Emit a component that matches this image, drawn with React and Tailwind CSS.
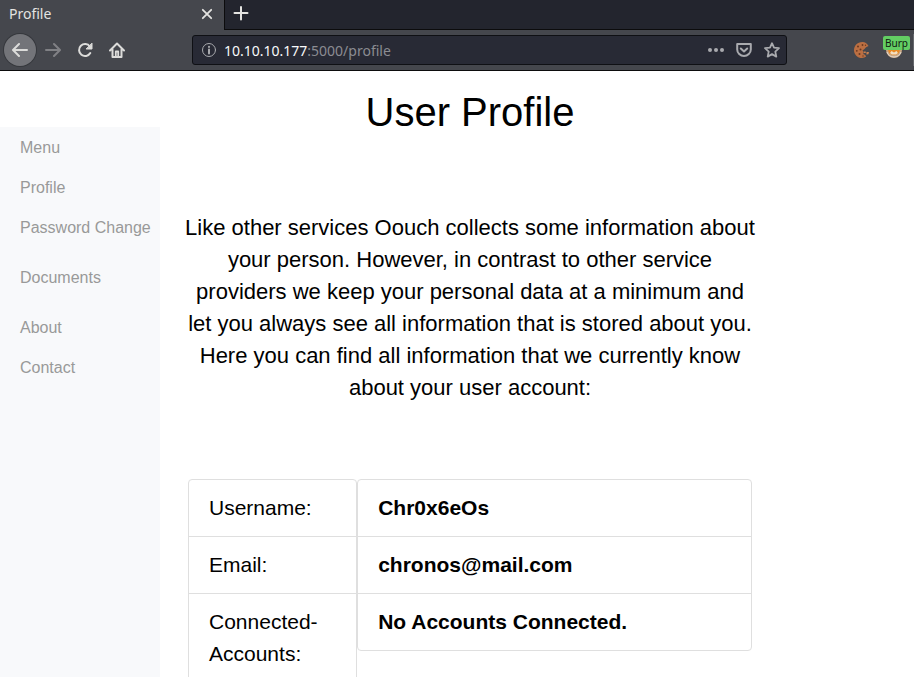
const menuGroups = [
  ["Menu", "Profile", "Password Change"],
  ["Documents"],
  ["About", "Contact"],
];

const labels = ["Username:", "Email:", "Connected-Accounts:"];
const values = ["Chr0x6eOs", "chronos@mail.com", "No Accounts Connected."];

function Icon({ size = 16, children, width = 2, className = "" }) {
  return (
    <svg
      width={size}
      height={size}
      viewBox="0 0 16 16"
      fill="none"
      stroke="currentColor"
      strokeWidth={width}
      strokeLinecap="round"
      strokeLinejoin="round"
      aria-hidden="true"
      className={`shrink-0 ${className}`}
    >
      {children}
    </svg>
  );
}

function TabStrip() {
  return (
    <div className="flex h-[30px] bg-[#23252e] text-[#e4e4e1]">
      <div className="flex w-[224px] items-center justify-between bg-[#45474d] px-[9px] pb-0.5">
        <span className="text-sm leading-7">Profile</span>
        <button type="button" aria-label="Close tab" className="flex">
          <Icon width={1.8}>
            <path d="M3.800 3.800l8.400 8.400M12.200 3.800l-8.400 8.400" />
          </Icon>
        </button>
      </div>
      <div className="flex flex-1 items-center border-b border-l border-[#0c0c0d] pl-2">
        <button type="button" aria-label="New tab" className="flex pb-1">
          <Icon>
            <path d="M8 2v12.500M1.500 8h13" />
          </Icon>
        </button>
      </div>
    </div>
  );
}

function CookieIcon() {
  return (
    <svg width="18" height="18" viewBox="0 0 18 18" aria-hidden="true">
      <path
        d="M9.500 1C4 1 1 5 1 9.200s3.500 7.800 8 7.800c1.800 0 3.200-.5 4.200-1.400l-1.200-1.800-1.800-.8.6-2-1.300-1.500L11.500 8l1.500-1.800 2.500-1.200C14 2.500 12 1 9.500 1z"
        fill="#bb6f42"
      />
      <path d="M13.500 11h2.500l-.6 2.300-2 .2zM11 10.500h1.800v1.500H11z" fill="#c98050" />
      <g fill="#6b3820">
        <circle cx="5" cy="5.500" r="1" />
        <circle cx="9.500" cy="4" r="0.900" />
        <circle cx="3.800" cy="9.800" r="0.900" />
        <circle cx="7.500" cy="8.500" r="1" />
        <circle cx="6.500" cy="13" r="1" />
        <circle cx="10" cy="15" r="0.700" />
        <circle cx="12.500" cy="4.200" r="0.700" />
      </g>
    </svg>
  );
}

function FoxIcon() {
  return (
    <svg width="18" height="18" viewBox="0 0 18 18" aria-hidden="true">
      <circle cx="9" cy="9" r="8" fill="#c9a582" />
      <path d="M3 7h12c0 5-2.500 7-6 7s-6-2-6-7z" fill="#e88a24" />
      <path d="M5 12l1.500-2L9 11.500l2.500-1.500 1.500 2-2 1.500H7z" fill="#f3e0c4" />
      <path d="M2 11c1 3.500 4 5 7 5s6-1.500 7-5" fill="none" stroke="#e3dcd2" />
    </svg>
  );
}

function Toolbar() {
  return (
    <div className="flex h-[41px] items-center border-b border-[#0c0c0d] bg-[#45474d] pl-1 text-[#dcdcda]">
      <button
        type="button"
        aria-label="Back"
        className="flex size-8 items-center justify-center rounded-full bg-[#737479] ring-1 ring-[#36383d]"
      >
        <Icon>
          <path d="M15 8H1.500M7 2L1 8l6 6" />
        </Icon>
      </button>
      <button type="button" aria-label="Forward" disabled className="ml-[9px] flex text-[#808185]">
        <Icon>
          <path d="M1 8h13.500M9 2l6 6-6 6" />
        </Icon>
      </button>
      <button type="button" aria-label="Reload" className="ml-4 flex">
        <Icon>
          <path d="M13.300 11a6 6 0 1 1-.4-6.500" />
          <path d="M15 1.500V7H9.500z" fill="currentColor" strokeWidth="1" />
        </Icon>
      </button>
      <button type="button" aria-label="Home" className="ml-4 flex">
        <Icon>
          <path d="M1 8.500L8 1.500l7 7M3.500 7.500V15h9V7.500" />
          <path d="M6.800 14.500v-5h2.400v5" strokeWidth="1.800" />
        </Icon>
      </button>

      <div className="ml-[67px] flex h-[30px] min-w-0 max-w-[595px] flex-1 items-center rounded-[3px] border border-[#0f1014] bg-[#282a35] pr-1.5 pl-2 text-[#a9aaae]">
        <button type="button" aria-label="Site information" className="flex">
          <Icon width={1}>
            <circle cx="8" cy="8" r="6.500" />
            <path d="M8 7.500v4M8 4.800v.2" strokeWidth="2" />
          </Icon>
        </button>
        <a href="#profile" className="ml-[7px] flex-1 truncate pt-0.5 text-sm text-[#8b8c92]">
          <span className="text-[#f9f9fa]">10.10.10.177</span>:5000/profile
        </a>
        <div className="flex gap-3">
          <button type="button" aria-label="Page actions" className="flex">
            <Icon>
              <g fill="currentColor" stroke="none">
                <circle cx="2" cy="8" r="2" />
                <circle cx="8" cy="8" r="2" />
                <circle cx="14" cy="8" r="2" />
              </g>
            </Icon>
          </button>
          <button type="button" aria-label="Save to Pocket" className="flex">
            <Icon>
              <path d="M1.200 2h13.600v5.500a6.800 6.500 0 0 1-13.600 0zM4.800 6.500L8 9.500l3.200-3" />
            </Icon>
          </button>
          <button type="button" aria-label="Bookmark this page" className="flex">
            <Icon width={1.8}>
              <path d="M8 1.200l2 4.500 5 .5-3.700 3.400 1 5L8 12.100l-4.300 2.500 1-5L1 6.200l5-.5z" />
            </Icon>
          </button>
        </div>
      </div>

      <button type="button" aria-label="Cookie editor" className="mr-3.5 ml-auto flex">
        <CookieIcon />
      </button>
      <button type="button" className="relative mr-2.5 flex" aria-label="Proxy: Burp">
        <FoxIcon />
        <span className="absolute -top-[5px] -left-[2px] rounded-[2px] bg-[#63cd63] px-[2px] text-[10px] leading-[14px] text-[#101810]">
          Burp
        </span>
      </button>
      <div className="h-8 w-px bg-[#66686d]" />
    </div>
  );
}

function Sidebar() {
  return (
    <nav className="mt-14 flex w-40 shrink-0 flex-col gap-2.5 bg-[#f8f9fb] pt-px text-base leading-6 whitespace-nowrap text-[#999999]">
      {menuGroups.map((group) => (
        <ul key={group[0]}>
          {group.map((item) => (
            <li key={item}>
              <a href={`#${item}`} className="block py-2 pl-5">
                {item}
              </a>
            </li>
          ))}
        </ul>
      ))}
    </nav>
  );
}

function ListGroup({ items, className }) {
  return (
    <ul className={`divide-y divide-[#dfdfdf] rounded border border-[#dfdfdf] ${className}`}>
      {items.map((item) => (
        <li key={item} className="px-5 py-3">
          {item}
        </li>
      ))}
    </ul>
  );
}

export default function App() {
  return (
    <div className="flex h-screen flex-col overflow-hidden bg-white">
      <header className="shrink-0 font-['Noto_Sans',sans-serif]">
        <TabStrip />
        <Toolbar />
      </header>
      <div className="flex min-h-0 flex-1 font-['Liberation_Sans',Arial,sans-serif]">
        <Sidebar />
        <main className="min-w-0 flex-1 pt-[17px] pr-[162px] pl-7 text-[21px] leading-8 text-black">
          <h1 className="text-center text-[40px] leading-12">User Profile</h1>
          <p className="-mx-1 mt-[76px] text-center text-[22px] leading-8">
            Like other services Oouch collects some information about your person. However, in
            contrast to other service providers we keep your personal data at a minimum and let you
            always see all information that is stored about you. Here you can find all information
            that we currently know about your user account:
          </p>
          <section className="mt-[75px] flex items-start">
            <ListGroup items={labels} className="w-3/10" />
            <ListGroup items={values} className="w-7/10 font-bold" />
          </section>
        </main>
      </div>
    </div>
  );
}
